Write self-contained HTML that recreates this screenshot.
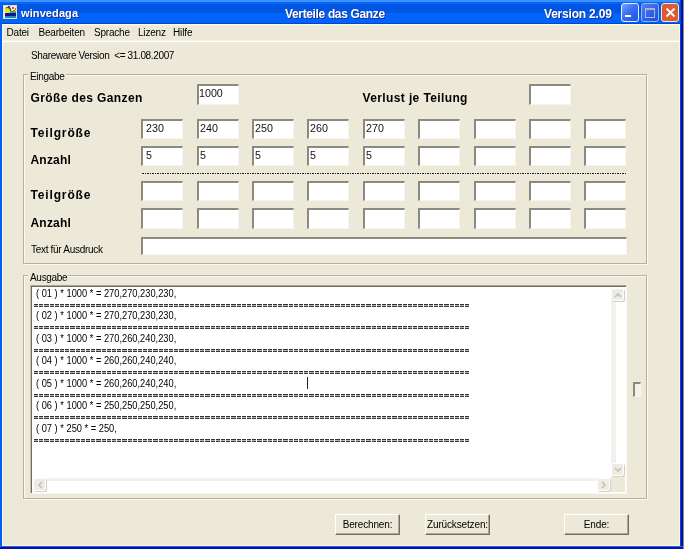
<!DOCTYPE html>
<html><head><meta charset="utf-8">
<style>
*{margin:0;padding:0;box-sizing:border-box}
html,body{width:684px;height:549px;overflow:hidden;background:#ECE9D8;font-family:"Liberation Sans",sans-serif;color:#000}
#w{position:absolute;left:0;top:0;width:684px;height:549px;will-change:transform;overflow:hidden}
.a{position:absolute}
#tb{left:0;top:0;width:680px;height:26px;background:linear-gradient(#3C93FF 0,#3C93FF 2px,#0765F8 2px,#0765F8 4px,#0055E3 4px,#0055E3 13px,#0063FA 13px,#0063FA 23px,#0045D8 23px,#0045D8 24px,#FFFCD8 24px,#FFFCD8 25px,#F2EFD8 25px,#F2EFD8 26px)}
.tt{color:#fff;font-weight:bold;white-space:nowrap;text-shadow:1px 1px 0 #1a3090;line-height:12px}
.lbl{white-space:nowrap;font-size:10px;line-height:10px;letter-spacing:-0.3px;color:#000}
.b{white-space:nowrap;font-weight:bold;font-size:12px;line-height:12px;letter-spacing:0.3px;color:#000}
.ed{background:#fff;border-style:solid;border-width:2px 1px 1px 2px;border-color:#8C8A7F #F6F4EC #F6F4EC #8C8A7F}
.ed span{position:absolute;left:3.5px;top:1.5px;font-size:11.5px;line-height:11px;white-space:nowrap;color:#111;transform-origin:0 0;transform:scaleX(0.93)}
.grp{border:1px solid #B4B1A0;box-shadow:inset 1px 1px 0 #FAF9F4,1px 1px 0 #FAF9F4}
.grpl{background:#ECE9D8;padding:0 1px 0 2px;font-size:10px;line-height:10px;letter-spacing:-0.3px;white-space:nowrap;color:#000}
.btn{background:#ECE9D8;border-style:solid;border-width:1px 1px 1px 1px;border-color:#fff #716F64 #716F64 #fff;box-shadow:inset -1px -1px 0 #ACA899}
.btn span{position:absolute;left:0;right:0;top:5px;text-align:center;font-size:10px;line-height:10px;letter-spacing:-0.15px;white-space:nowrap;color:#000}
.ol{font-size:10.5px;line-height:10px;white-space:pre;transform-origin:0 0;transform:scaleX(0.885);color:#000}
.eq{width:436px;height:3px;background-image:repeating-linear-gradient(90deg,transparent 0,transparent 4.2px,#fff 4.2px,#fff 5.195px),linear-gradient(#333 0,#333 1px,#B4B4B4 1px,#B4B4B4 2px,#3a3a3a 2px)}
.sb{background:#EDECE4;border:1px solid #fff;border-radius:2px;box-shadow:1px 1px 0 #D2D0C4}
.sbv{background:linear-gradient(90deg,#F2F1EB 0,#F2F1EB 5px,#fff 5px)}
.sbh{background:linear-gradient(#F2F1EB 0,#F2F1EB 3px,#fff 3px)}
</style></head><body><div id="w">
<div id="tb" class="a"></div>
<!-- window borders -->
<div class="a" style="left:0;top:2px;width:2px;height:547px;background:#0060FF"></div><div class="a" style="left:0;top:0;width:2px;height:2px;background:#3C93FF;border-top-left-radius:2px"></div>
<div class="a" style="left:2px;top:24px;width:1px;height:522px;background:#FCF8D8"></div>
<div class="a" style="left:679px;top:24px;width:1px;height:522px;background:#FCF8D8"></div>
<div class="a" style="left:680px;top:0;width:3px;height:549px;background:linear-gradient(90deg,#0040E8 0,#0040E8 1px,#0012A8 1px)"></div>
<div class="a" style="left:683px;top:0;width:1px;height:549px;background:#8a8a8a"></div>
<div class="a" style="left:2px;top:545px;width:678px;height:1px;background:#FCF8D8"></div>
<div class="a" style="left:0;top:546px;width:683px;height:3px;background:linear-gradient(#2F60F0 0,#2F60F0 1px,#0012A8 1px)"></div>

<!-- title icon -->
<div class="a" style="left:3px;top:5px;width:14px;height:14px;background:#EEF0D4;border:1px solid #E6E2B8">
  <div class="a" style="left:1px;top:1px;width:6px;height:6px;border-radius:50%;background:#F2E200;box-shadow:inset -1px 1px 0 #3a3a60"></div>
  <div class="a" style="left:4px;top:0px;width:2px;height:2px;background:#2040C0"></div>
  <div class="a" style="left:8px;top:1px;width:2px;height:2px;background:#E05030"></div>
  <div class="a" style="left:11px;top:2px;width:1px;height:2px;background:#E05030"></div>
  <div class="a" style="left:9px;top:4px;width:2px;height:1px;background:#E04040"></div>
  <div class="a" style="left:7px;top:4px;width:1px;height:1px;background:#20E0E0"></div>
  <div class="a" style="left:6px;top:5px;width:6px;height:2px;background:#38B838"></div>
  <div class="a" style="left:1px;top:7px;width:11px;height:3px;background:#0A10A8"></div>
  <div class="a" style="left:1px;top:10px;width:11px;height:2px;background:#1C8CC8"></div>
  <div class="a" style="left:11px;top:11px;width:1px;height:1px;background:#E05020"></div>
</div>
<div class="a tt" style="left:21px;top:7px;font-size:11px;letter-spacing:0.1px">winvedaga</div>
<div class="a tt" style="left:285px;top:8px;font-size:12px;letter-spacing:-0.35px">Verteile das Ganze</div>
<div class="a tt" style="left:544px;top:8px;font-size:12px;letter-spacing:-0.2px">Version 2.09</div>
<!-- title buttons -->
<div class="a" style="left:621px;top:3px;width:18px;height:19px;border:1px solid #E8EEFF;border-radius:3px;background:linear-gradient(135deg,#78A4FF,#3A6EF4 45%,#1F52E2)">
  <div class="a" style="left:3px;top:11px;width:6px;height:2px;background:#fff"></div>
</div>
<div class="a" style="left:641px;top:3px;width:18px;height:19px;border:1px solid #97B2F0;border-radius:3px;background:linear-gradient(135deg,#4F84F8,#2B5FE8 60%,#2050D8)">
  <div class="a" style="left:3px;top:4px;width:10px;height:10px;border:1px solid #A8B8E8;border-top:2px solid #C0A8B8"></div>
</div>
<div class="a" style="left:661px;top:3px;width:18px;height:19px;border:1px solid #F0E8E0;border-radius:3px;background:#E05A30">
  <svg class="a" style="left:3px;top:3px" width="11" height="11" viewBox="0 0 11 11"><path d="M1.5 1.5L9.5 9.5M9.5 1.5L1.5 9.5" stroke="#fff" stroke-width="1.8"/></svg>
</div>

<!-- menu -->
<div class="a lbl" style="left:6.5px;top:27.5px;letter-spacing:-0.2px">Datei</div>
<div class="a lbl" style="left:38.5px;top:27.5px;letter-spacing:-0.2px">Bearbeiten</div>
<div class="a lbl" style="left:94px;top:27.5px;letter-spacing:-0.2px">Sprache</div>
<div class="a lbl" style="left:138px;top:27.5px;letter-spacing:-0.2px">Lizenz</div>
<div class="a lbl" style="left:173px;top:27.5px;letter-spacing:-0.1px">Hilfe</div>
<div class="a" style="left:3px;top:40px;width:676px;height:1px;background:#F4F2EA"></div><div class="a" style="left:3px;top:41px;width:676px;height:1px;background:#fff"></div>

<div class="a lbl" style="left:31px;top:50.5px;letter-spacing:-0.36px">Shareware Version&nbsp; &lt;= 31.08.2007</div>

<!-- Eingabe group -->
<div class="a grp" style="left:23px;top:74px;width:624px;height:190px"></div>
<div class="a grpl" style="left:28px;top:72px">Eingabe</div>

<div class="a b" style="left:30.5px;top:91.6px;letter-spacing:0.39px">Größe des Ganzen</div>
<div class="a ed" style="left:197px;top:84px;width:42px;height:21px"><span style="left:0.3px">1000</span></div>
<div class="a b" style="left:362.5px;top:92px;letter-spacing:0.38px">Verlust je Teilung</div>
<div class="a ed" style="left:529px;top:84px;width:42px;height:21px"></div>

<div class="a b" style="left:30.5px;top:126.5px;letter-spacing:0.85px">Teilgröße</div>
<div class="a b" style="left:30.5px;top:154.3px;letter-spacing:0.2px">Anzahl</div>
<div class="a b" style="left:30.5px;top:188.7px;letter-spacing:0.85px">Teilgröße</div>
<div class="a b" style="left:30.5px;top:216.5px;letter-spacing:0.2px">Anzahl</div>
<div class="a ed" style="left:141px;top:119px;width:42px;height:20px"><span style="left:3.3px">230</span></div>
<div class="a ed" style="left:141px;top:146px;width:42px;height:20px"><span style="left:3.3px">5</span></div>
<div class="a ed" style="left:141px;top:181px;width:42px;height:20px"></div>
<div class="a ed" style="left:141px;top:208px;width:42px;height:21px"></div>
<div class="a ed" style="left:197px;top:119px;width:42px;height:20px"><span style="left:0.5px">240</span></div>
<div class="a ed" style="left:197px;top:146px;width:42px;height:20px"><span style="left:0.5px">5</span></div>
<div class="a ed" style="left:197px;top:181px;width:42px;height:20px"></div>
<div class="a ed" style="left:197px;top:208px;width:42px;height:21px"></div>
<div class="a ed" style="left:252px;top:119px;width:42px;height:20px"><span style="left:0.5px">250</span></div>
<div class="a ed" style="left:252px;top:146px;width:42px;height:20px"><span style="left:0.5px">5</span></div>
<div class="a ed" style="left:252px;top:181px;width:42px;height:20px"></div>
<div class="a ed" style="left:252px;top:208px;width:42px;height:21px"></div>
<div class="a ed" style="left:307px;top:119px;width:42px;height:20px"><span style="left:0.5px">260</span></div>
<div class="a ed" style="left:307px;top:146px;width:42px;height:20px"><span style="left:0.5px">5</span></div>
<div class="a ed" style="left:307px;top:181px;width:42px;height:20px"></div>
<div class="a ed" style="left:307px;top:208px;width:42px;height:21px"></div>
<div class="a ed" style="left:363px;top:119px;width:42px;height:20px"><span style="left:0.5px">270</span></div>
<div class="a ed" style="left:363px;top:146px;width:42px;height:20px"><span style="left:0.5px">5</span></div>
<div class="a ed" style="left:363px;top:181px;width:42px;height:20px"></div>
<div class="a ed" style="left:363px;top:208px;width:42px;height:21px"></div>
<div class="a ed" style="left:418px;top:119px;width:42px;height:20px"></div>
<div class="a ed" style="left:418px;top:146px;width:42px;height:20px"></div>
<div class="a ed" style="left:418px;top:181px;width:42px;height:20px"></div>
<div class="a ed" style="left:418px;top:208px;width:42px;height:21px"></div>
<div class="a ed" style="left:474px;top:119px;width:42px;height:20px"></div>
<div class="a ed" style="left:474px;top:146px;width:42px;height:20px"></div>
<div class="a ed" style="left:474px;top:181px;width:42px;height:20px"></div>
<div class="a ed" style="left:474px;top:208px;width:42px;height:21px"></div>
<div class="a ed" style="left:529px;top:119px;width:42px;height:20px"></div>
<div class="a ed" style="left:529px;top:146px;width:42px;height:20px"></div>
<div class="a ed" style="left:529px;top:181px;width:42px;height:20px"></div>
<div class="a ed" style="left:529px;top:208px;width:42px;height:21px"></div>
<div class="a ed" style="left:584px;top:119px;width:42px;height:20px"></div>
<div class="a ed" style="left:584px;top:146px;width:42px;height:20px"></div>
<div class="a ed" style="left:584px;top:181px;width:42px;height:20px"></div>
<div class="a ed" style="left:584px;top:208px;width:42px;height:21px"></div>

<div class="a" style="left:142px;top:173px;width:485px;height:1px;background-image:linear-gradient(90deg,#1a1a1a 0,#1a1a1a 2px,transparent 2px,transparent 2.7px,#1a1a1a 2.7px,#1a1a1a 3.8px,transparent 3.8px);background-size:5px 1px"></div>
<div class="a lbl" style="left:31px;top:245px">Text für Ausdruck</div>
<div class="a ed" style="left:141px;top:237px;width:486px;height:18px"></div>

<!-- Ausgabe group -->
<div class="a grp" style="left:23px;top:275px;width:624px;height:224px"></div>
<div class="a grpl" style="left:28px;top:273px">Ausgabe</div>
<div class="a" style="left:30px;top:285px;width:597px;height:209px;background:#fff;border-style:solid;border-width:1px;border-color:#A8A598 #F8F7F0 #F8F7F0 #C4C1B2;box-shadow:inset 1px 1px 0 #6F6D62"></div>
<div class="a ol" style="left:35.5px;top:287.60px">( 01 ) * 1000 * = 270,270,230,230,</div>
<div class="a eq" style="left:34px;top:304px"></div>
<div class="a ol" style="left:35.5px;top:310.10px">( 02 ) * 1000 * = 270,270,230,230,</div>
<div class="a eq" style="left:34px;top:326px"></div>
<div class="a ol" style="left:35.5px;top:332.60px">( 03 ) * 1000 * = 270,260,240,230,</div>
<div class="a eq" style="left:34px;top:349px"></div>
<div class="a ol" style="left:35.5px;top:355.10px">( 04 ) * 1000 * = 260,260,240,240,</div>
<div class="a eq" style="left:34px;top:371px"></div>
<div class="a ol" style="left:35.5px;top:377.60px">( 05 ) * 1000 * = 260,260,240,240,</div>
<div class="a eq" style="left:34px;top:394px"></div>
<div class="a ol" style="left:35.5px;top:400.10px">( 06 ) * 1000 * = 250,250,250,250,</div>
<div class="a eq" style="left:34px;top:416px"></div>
<div class="a ol" style="left:35.5px;top:422.60px">( 07 ) * 250 * = 250,</div>
<div class="a eq" style="left:34px;top:439px"></div>

<!-- scrollbars -->
<div class="a sbv" style="left:611px;top:288px;width:13px;height:189px"></div>
<div class="a sbh" style="left:33px;top:478px;width:578px;height:13px"></div>
<div class="a" style="left:611px;top:477px;width:14px;height:15px;background:#ECE9D8"></div>
<div class="a sb" style="left:611px;top:288px;width:13px;height:13px"><svg class="a" style="left:2px;top:3px" width="8" height="6"><path d="M1 5L4 2L7 5" stroke="#C4C2B6" stroke-width="1.6" fill="none"/></svg></div>
<div class="a sb" style="left:611px;top:463px;width:13px;height:13px"><svg class="a" style="left:2px;top:3px" width="8" height="6"><path d="M1 1L4 4L7 1" stroke="#C4C2B6" stroke-width="1.6" fill="none"/></svg></div>
<div class="a sb" style="left:33px;top:478px;width:13px;height:13px"><svg class="a" style="left:3px;top:2px" width="6" height="8"><path d="M5 1L2 4L5 7" stroke="#C4C2B6" stroke-width="1.6" fill="none"/></svg></div>
<div class="a sb" style="left:597px;top:478px;width:13px;height:13px"><svg class="a" style="left:3px;top:2px" width="6" height="8"><path d="M1 1L4 4L1 7" stroke="#C4C2B6" stroke-width="1.6" fill="none"/></svg></div>
<!-- caret -->
<div class="a" style="left:307px;top:377px;width:1px;height:12px;background:#222"></div>
<!-- small box -->
<div class="a ed" style="left:633px;top:382px;width:8px;height:15px;background:#F4F2E6"></div>

<!-- buttons -->
<div class="a btn" style="left:335px;top:514px;width:65px;height:21px"><span>Berechnen:</span></div>
<div class="a btn" style="left:425px;top:514px;width:65px;height:21px"><span>Zurücksetzen:</span></div>
<div class="a btn" style="left:564px;top:514px;width:65px;height:21px"><span>Ende:</span></div>
</div></body></html>
